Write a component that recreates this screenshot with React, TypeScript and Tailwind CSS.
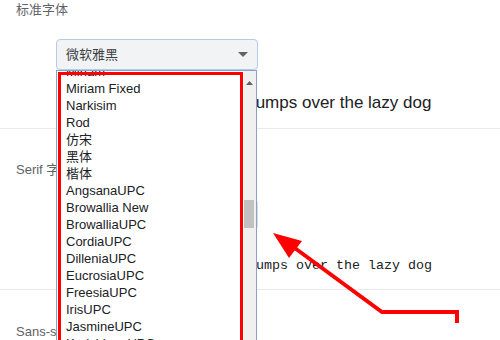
export default function App() {
  const fonts = [
    'Miriam',
    'Miriam Fixed',
    'Narkisim',
    'Rod',
    '仿宋',
    '黑体',
    '楷体',
    'AngsanaUPC',
    'Browallia New',
    'BrowalliaUPC',
    'CordiaUPC',
    'DilleniaUPC',
    'EucrosiaUPC',
    'FreesiaUPC',
    'IrisUPC',
    'JasmineUPC',
    'KodchiangUPC',
    'LilyUPC',
  ];

  return (
    <div className="relative w-[500px] h-[340px] overflow-hidden bg-white font-['Liberation_Sans','Noto_Sans_CJK_SC',sans-serif]">
      {/* 标准字体 */}
      <section className="h-[129px] pl-4 pt-[2px] border-b border-[#e8eaed]">
        <div className="text-[13px] leading-[16px] text-[#5f6368]">标准字体</div>
        <div className="ml-10 mt-[21px] flex h-[31px] w-[202px] items-center justify-between rounded-[4px] border border-[#b3cbe9] bg-[#f1f3f4] pl-[9px] pr-[9px]">
          <span className="text-[13px] text-[#3c4043]">微软雅黑</span>
          <svg width="10" height="6" viewBox="0 0 10 6">
            <path d="M0 0 L10 0 L5 5 Z" fill="#5f6368" />
          </svg>
        </div>
        <div className="ml-[79px] mt-[21px] whitespace-nowrap text-[17px] leading-[24px] text-[#202124]">
          The quick brown fox jumps over the lazy dog
        </div>
      </section>

      {/* Serif 字体 */}
      <section className="h-[161px] pl-4 pt-[33px] border-b border-[#e8eaed]">
        <div className="text-[13px] leading-[16px] text-[#5f6368]">Serif 字体</div>
        <div className="ml-10 mt-[21px] flex h-[31px] w-[202px] items-center rounded-[4px] border border-[#dadce0] bg-[#f1f3f4] pl-[9px]">
          <span className="text-[13px] text-[#3c4043]">宋体</span>
        </div>
        <div className="ml-[72px] mt-[26px] whitespace-nowrap font-['Liberation_Mono',monospace] text-[13.33px] leading-[20px] text-[#202124]">
          The quick brown fox jumps over the lazy dog
        </div>
      </section>

      {/* Sans-serif 字体 */}
      <section className="pl-4 pt-[34px]">
        <div className="text-[13px] leading-[16px] text-[#5f6368]">Sans-serif 字体</div>
      </section>

      {/* open dropdown list */}
      <div className="absolute left-[56px] top-[70px] flex h-[290px] w-[201px] overflow-hidden border border-[#8aa3c4] bg-white">
        <div className="flex-1 overflow-hidden pl-[9px]">
          <div className="-mt-[8px]">
            {fonts.map((f) => (
              <div key={f} className="h-[17px] whitespace-nowrap text-[13px] leading-[17px] text-[#202124]">
                {f}
              </div>
            ))}
          </div>
        </div>
        <div className="relative w-[12px] bg-[#f0f0f0]">
          <svg className="absolute left-[2px] top-[10px]" width="7" height="4" viewBox="0 0 7 4">
            <path d="M0 4 L3.5 0 L7 4 Z" fill="#606060" />
          </svg>
          <div className="absolute left-0 top-[129px] h-[28px] w-[10px] bg-[#c1c1c1]" />
        </div>
      </div>

      {/* red annotation box */}
      <div className="absolute left-[58px] top-[72px] h-[300px] w-[185px] border-[3px] border-[#ff0000]" />

      {/* red annotation arrow */}
      <svg className="absolute left-0 top-0" width="500" height="340" viewBox="0 0 500 340">
        <polyline
          points="457,323 457,312 382,312 292,246"
          fill="none"
          stroke="#ff0000"
          strokeWidth="4"
          strokeLinejoin="miter"
        />
        <path d="M273 233 L302 241 L289 258 Z" fill="#ff0000" />
      </svg>
    </div>
  );
}
